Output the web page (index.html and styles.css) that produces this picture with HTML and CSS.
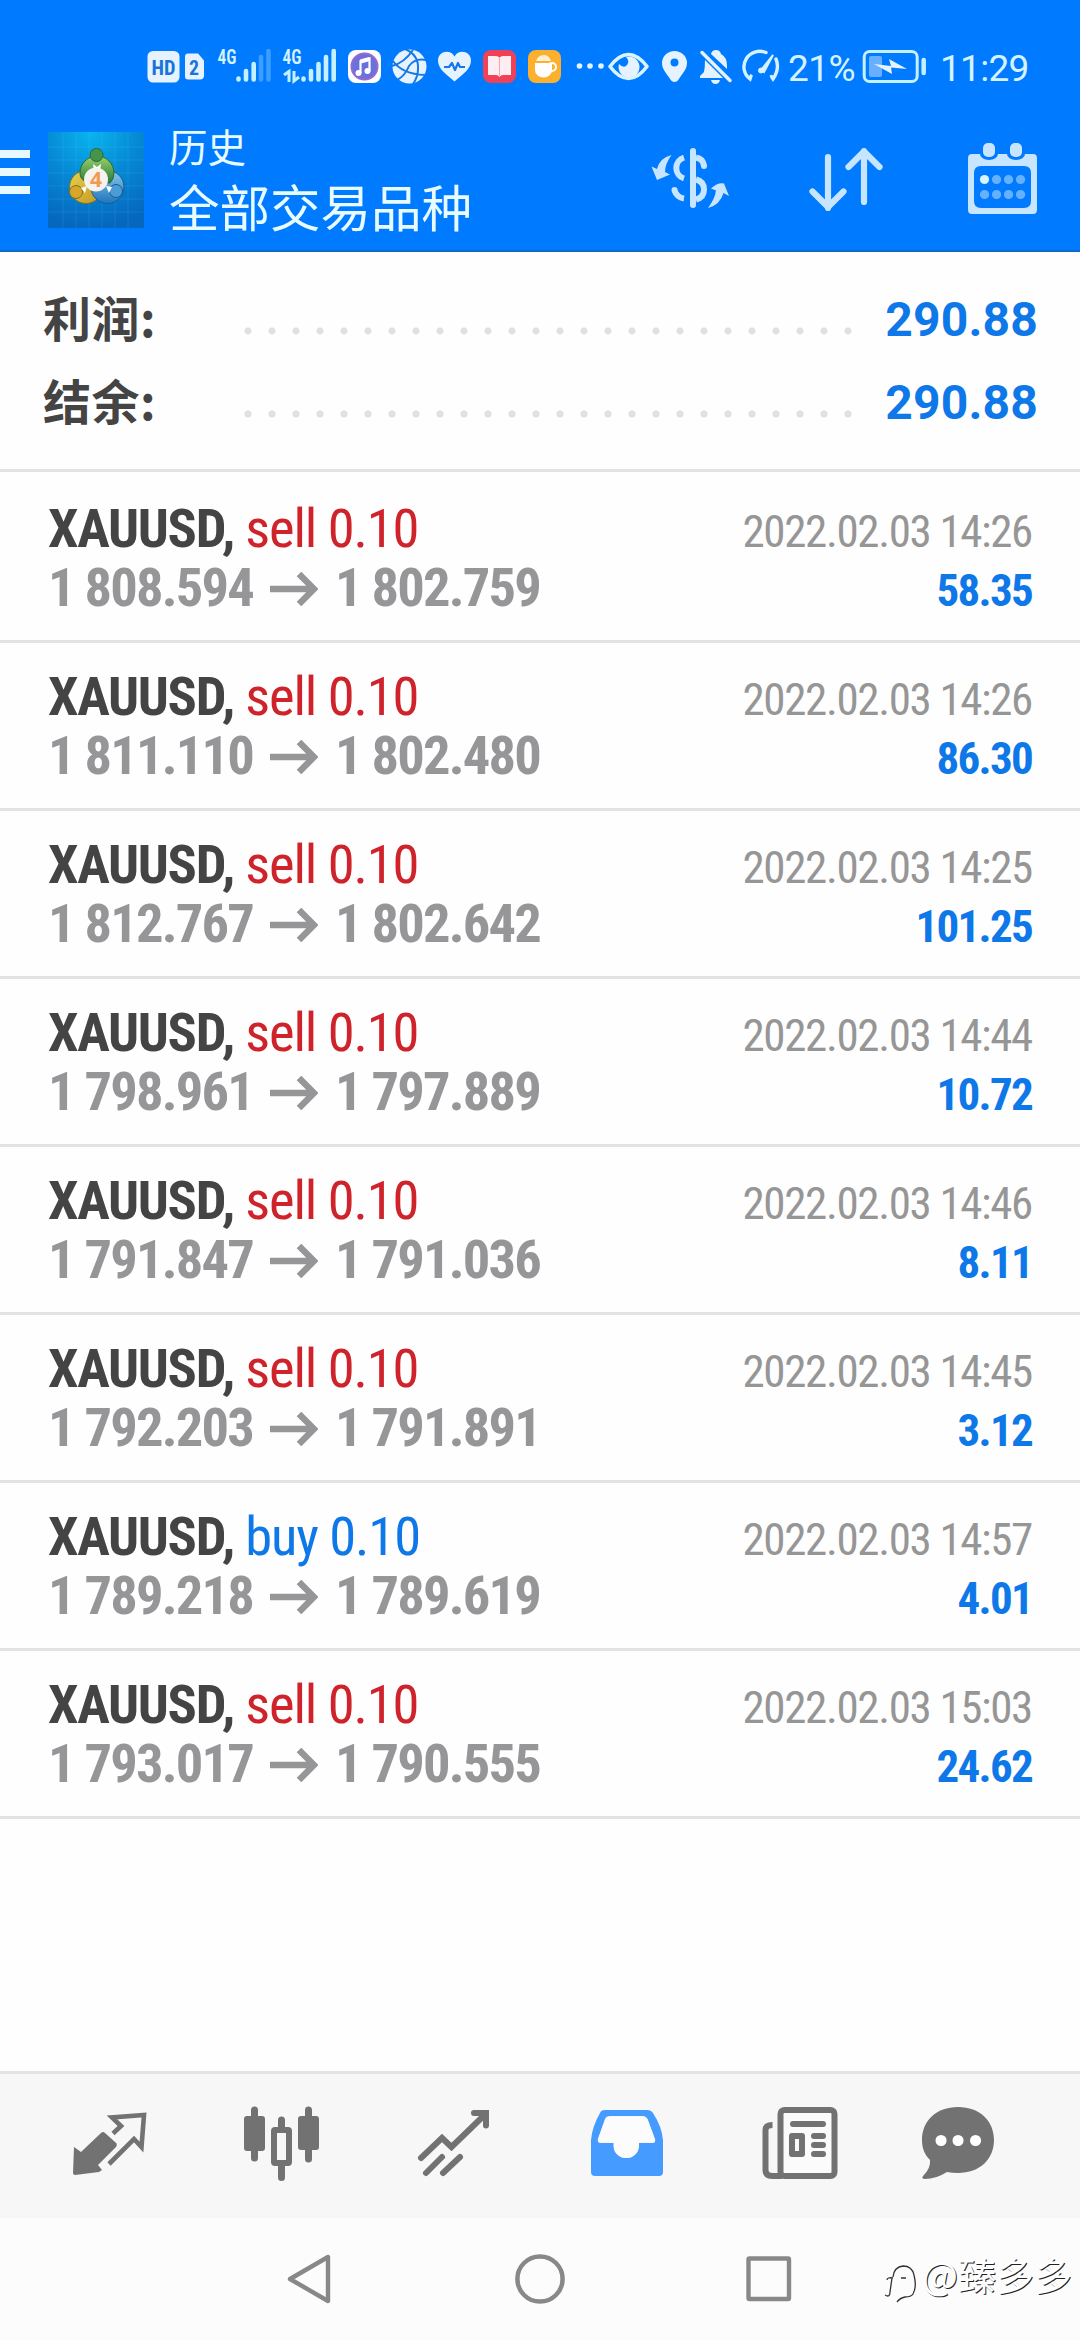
FILE: index.html
```html
<!DOCTYPE html>
<html lang="zh-CN">
<head>
<meta charset="utf-8">
<title>历史</title>
<link rel="stylesheet" href="styles.css">
</head>
<body>
<header class="top">
  <div class="status">
    <svg width="36" height="80" viewBox="146 30 36 80"><rect x="147.500" y="51" width="32" height="31.500" rx="5.500" fill="#e6f3ff"/><text class="badge" x="151.500" y="74.500" textLength="24" lengthAdjust="spacingAndGlyphs">HD</text></svg>
    <svg width="28" height="80" viewBox="182 30 28 80"><path d="M188 53.500h10l6 7v15a4 4 0 0 1-4 4h-12a3 3 0 0 1-3-3v-20a3 3 0 0 1 3-3z" fill="#e6f3ff"/><text class="badge" x="189" y="74.500" textLength="10" lengthAdjust="spacingAndGlyphs">2</text></svg>
    <svg width="66" height="80" viewBox="210 30 66 80"><text class="net" x="217.500" y="64" textLength="19" lengthAdjust="spacingAndGlyphs">4G</text><g stroke="#c5f1ff" stroke-width="4.600" stroke-linecap="round"><path d="M238.500 78.500v1M246 71v8.500M253.700 64v15.500"/><path d="M261 57v22.500M268.500 51v28.500" opacity=".3"/></g></svg>
    <svg width="66" height="80" viewBox="276 30 66 80"><text class="net" x="282.500" y="64" textLength="19" lengthAdjust="spacingAndGlyphs">4G</text><path d="M284 75l5-3.500V82M294 71v10l5-4" fill="none" stroke="#c5f1ff" stroke-width="3"/><path d="M303.500 78.500v1M311 71v8.500M318.500 64v15.500M326 57v22.500M333.700 51v28.500" stroke="#c5f1ff" stroke-width="4.600" stroke-linecap="round"/></svg>
    <svg width="45" height="80" viewBox="342 30 45 80"><rect x="348" y="50" width="33" height="33" rx="8" fill="#fff"/><circle cx="364.500" cy="66.500" r="13" fill="#6971dc" stroke="#9868cc" stroke-width="2"/><path d="M360.500 73v-12l9-2.500v12.500" fill="none" stroke="#fff" stroke-width="2.200"/><path d="M360.500 61.500l9-2.500" stroke="#fff" stroke-width="4"/><circle cx="358.500" cy="73" r="3" fill="#fff"/><circle cx="367.500" cy="71" r="3" fill="#fff"/></svg>
    <svg width="45" height="80" viewBox="387 30 45 80"><circle cx="409.500" cy="66.500" r="17" fill="#e6f3ff"/><path d="M392 66q12-3 21-16M393 61q9 13 32 14M405 49q14 6 13 20 0 8-5 15M397 80q8-4 12-14 6-8 17-6" fill="none" stroke="#1478e8" stroke-width="2"/></svg>
    <svg width="45" height="80" viewBox="432 30 45 80"><path d="M454.500 81.500C446 74 438 69 438 60.500c0-9 12-12 16.500-4 4.500-8 16.500-5 16.500 4 0 8.500-8 13.500-16.500 21z" fill="#e6f3ff"/><path d="M444 67h5l3-4 3 7 3-7 2 4h5" fill="none" stroke="#1478e8" stroke-width="2.200" stroke-linejoin="round"/></svg>
    <svg width="45" height="80" viewBox="477 30 45 80"><rect x="483" y="50" width="33" height="33" rx="8" fill="#ef4257"/><path d="M488 56h8q2 0 3.500 1.500Q501 56 503 56h8v19h-8q-2 0-3.500 2-1.500-2-3.500-2h-8z" fill="#ffeef1"/><path d="M499.500 57v19" fill="none" stroke="#f6a5ad" stroke-width="1"/></svg>
    <svg width="48" height="80" viewBox="522 30 48 80"><rect x="528" y="50" width="33" height="33" rx="8" fill="#fdb02e"/><path d="M535 63h17v7a8 7 0 0 1-17 0z" fill="#fff"/><path d="M536 61q2-6 8-6 5 0 7 6z" fill="#fff0d4"/><circle cx="552" cy="67" r="4" fill="none" stroke="#fff" stroke-width="2"/></svg>
    <svg width="34" height="80" viewBox="570 30 34 80" fill="#e6f3ff"><circle cx="579.500" cy="66" r="2.800"/><circle cx="590" cy="66" r="2.800"/><circle cx="601" cy="66" r="2.800"/></svg>
    <svg width="50" height="80" viewBox="604 30 50 80"><path d="M610 66.500q9-12 18.500-12t18.500 12q-9 12-18.500 12T610 66.500z" fill="none" stroke="#d9f3ff" stroke-width="3.600" stroke-linejoin="round"/><path d="M626 57a10.500 10.500 0 1 1-7 7q5 5 8 1t-1-8z" fill="#e6f3ff"/></svg>
    <svg width="42" height="80" viewBox="654 30 42 80"><path fill-rule="evenodd" d="M674.500 82q-3 0-5-4c-4-6-7.500-9-7.500-15a12.500 12 0 0 1 25 0c0 6-3.500 9-7.500 15q-2 4-5 4zM674.500 58.500a4 4 0 1 0 0 8 4 4 0 0 0 0-8z" fill="#e6f3ff"/></svg>
    <svg width="42" height="80" viewBox="696 30 42 80"><path d="M711 54q1-4 5-4t5 4q6 3 6 12v3zM705 60l18 18h-23v-2l4-4q1-5 1-12zM711 80h9q-1 4-4.500 4t-4.500-4z" fill="#e6f3ff"/><path d="M702 52.500l28 28" stroke="#e6f3ff" stroke-width="3.500" stroke-linecap="round"/></svg>
    <svg width="48" height="80" viewBox="738 30 48 80" fill="none" stroke="#d4f3ff" stroke-width="3.400" stroke-linecap="round"><path d="M766 52.500A16 15.500 0 0 0 750 79l1-3M776 59q4 10-3 20l-1.500-2.500"/><path d="M761 70l12-15-9 17z" fill="#d4f3ff" stroke-width="2"/><circle cx="761" cy="70.500" r="2.500" fill="#d4f3ff" stroke-width="1"/></svg>
    <span class="percent">21%</span>
    <svg width="76" height="80" viewBox="858 30 76 80"><rect x="864.200" y="51.500" width="53" height="30" rx="5.500" fill="none" stroke="#c5f1ff" stroke-width="3"/><rect x="869" y="56" width="13" height="21" rx="2" fill="#68b0ff"/><path d="M874 64l17 2-2-7 18 10-16-1.500 1 6.500z" fill="#e6f3ff"/><path d="M923.700 60v13" stroke="#c5f1ff" stroke-width="4.500" stroke-linecap="round"/></svg>
    <span class="clock">11:29</span>
  </div>
  <div class="appbar">
    <svg class="menu" width="30" height="46" viewBox="0 0 30 46"><path d="M0 4h30M0 22h30M0 40h30" stroke="#e8f8ff" stroke-width="8"/></svg>
    <svg class="logo" width="96" height="96" viewBox="0 0 96 96">
      <defs>
        <radialGradient id="sky" cx=".45" cy="0" r="1"><stop offset="0" stop-color="#08b5f0"/><stop offset=".5" stop-color="#0688d4"/><stop offset="1" stop-color="#0567be"/></radialGradient>
        <linearGradient id="green" x2="0" y2="1"><stop offset="0" stop-color="#9ed26b"/><stop offset="1" stop-color="#247a3b"/></linearGradient>
        <linearGradient id="gold" x2="1" y2="1"><stop offset="0" stop-color="#e5d34c"/><stop offset="1" stop-color="#c49622"/></linearGradient>
        <linearGradient id="blue" x2="0" y2="1"><stop offset="0" stop-color="#8dc8eb"/><stop offset="1" stop-color="#1f75bd"/></linearGradient>
      </defs>
      <rect width="96" height="96" fill="url(#sky)"/>
      <path d="M15 0v96M28 0v96M41 0v96M54 0v96M67 0v96M80 0v96M0 15h96M0 28h96M0 41h96M0 54h96M0 67h96M0 80h96" stroke="#8de0ff" stroke-opacity=".12"/>
      <circle cx="38" cy="55" r="16.500" fill="url(#gold)" stroke="#806f24"/>
      <circle cx="59.500" cy="55" r="16.500" fill="url(#blue)" stroke="#155c94"/>
      <path d="M32 41a17 17 0 1 1 34 0q0 6-4 10l-24-1q-6-3-6-9z" fill="url(#green)" stroke="#246c30"/>
      <circle cx="48.500" cy="23" r="6.500" fill="#45944c" stroke="#246c30"/>
      <circle cx="28" cy="60" r="6.500" fill="#d8a72a" stroke="#806f24"/>
      <circle cx="68" cy="59" r="6.500" fill="#4a9bd6" stroke="#155c94"/>
      <path d="M45 32l4 3 4-3-1 7h-6zM33 56l6-2-2 7zM64 55l-6-1 3 7z" fill="#fff"/>
      <circle cx="48" cy="47.500" r="12" fill="#f5f2ef"/>
      <text class="four" x="42" y="55">4</text>
    </svg>
    <div class="titles"><div class="sub">历史</div><div class="title">全部交易品种</div></div>
    <svg class="act-cur" width="84" height="70" viewBox="648 144 84 70" fill="none" stroke="#c8e5ff" stroke-width="6">
      <path d="M693 151v54" stroke-linecap="round"/>
      <path d="M684 157.500a11 11 0 0 0 0 21M684 198.500q-7-1-9.500-8M696 157.500q7 1 8 8.500" />
      <path d="M674.500 190v.1M704 166v.1" stroke-linecap="round"/>
      <path d="M696 179.500q8 2 8 10t-8 10"/>
      <path d="M671.500 155q-12 3-14.500 14l-5.500-2.500 5.500 13.500 13-5.500-5-2.500q0-8 6.500-17zM708 208q12-3 15.500-15l5.500 3-5-12.500q-6-1.500-13 5l5 2q-1 8-8 17.500z" fill="#c8e5ff" stroke="none"/>
    </svg>
    <svg class="act-sort" width="76" height="66" viewBox="808 146 76 66" fill="none" stroke="#c8e5ff" stroke-width="6.200" stroke-linecap="round" stroke-linejoin="round"><path d="M828 157v51M812.500 191.500l15.500 15.500 15.500-15.500M864 202v-51M848.500 167l15.500-15.500 15.500 15.500"/></svg>
    <svg class="act-cal" width="72" height="74" viewBox="966 142 72 74"><path fill-rule="evenodd" d="M972 154h8a9 6 0 0 0 18 0h9a9 6 0 0 0 18 0h8q4 0 4 4v52q0 4-4 4h-61q-4 0-4-4v-52q0-4 4-4zM981 166q-7 0-7 7v28q0 7 7 7h43q7 0 7-7v-28q0-7-7-7z" fill="#c8e5ff"/><rect x="983" y="143" width="12" height="14" rx="5" fill="#c8e5ff"/><rect x="1010" y="143" width="12" height="14" rx="5" fill="#c8e5ff"/><circle cx="984.500" cy="179.500" r="4.600" fill="#d8f5ff"/><path d="M996.500 179.500h.1M1008.500 179.500h.1M1020.500 179.500h.1M984.500 194.500h.1M996.500 194.500h.1M1008.500 194.500h.1M1020.500 194.500h.1" stroke="#66b1ff" stroke-width="9.200" stroke-linecap="round"/></svg>
  </div>
</header>
<section class="summary">
  <div class="sum-row"><span class="label">利润:</span><span class="dots"></span><span class="total">290.88</span></div>
  <div class="sum-row"><span class="label">结余:</span><span class="dots"></span><span class="total">290.88</span></div>
</section>
<svg width="0" height="0" class="defs"><symbol id="arrow" viewBox="0 0 48 34"><path d="M0 17h44M29 2l15 15-15 15" fill="none" stroke="#969699" stroke-width="6.500"/></symbol></svg>
<main class="deals">
  <article class="deal"><div class="left"><div class="name">XAUUSD, <span class="sell">sell 0.10</span></div><div class="prices"><span>1 808.594</span><svg class="arrow"><use href="#arrow"/></svg><span>1 802.759</span></div></div><div class="right"><div class="date">2022.02.03 14:26</div><div class="profit">58.35</div></div></article>
  <article class="deal"><div class="left"><div class="name">XAUUSD, <span class="sell">sell 0.10</span></div><div class="prices"><span>1 811.110</span><svg class="arrow"><use href="#arrow"/></svg><span>1 802.480</span></div></div><div class="right"><div class="date">2022.02.03 14:26</div><div class="profit">86.30</div></div></article>
  <article class="deal"><div class="left"><div class="name">XAUUSD, <span class="sell">sell 0.10</span></div><div class="prices"><span>1 812.767</span><svg class="arrow"><use href="#arrow"/></svg><span>1 802.642</span></div></div><div class="right"><div class="date">2022.02.03 14:25</div><div class="profit">101.25</div></div></article>
  <article class="deal"><div class="left"><div class="name">XAUUSD, <span class="sell">sell 0.10</span></div><div class="prices"><span>1 798.961</span><svg class="arrow"><use href="#arrow"/></svg><span>1 797.889</span></div></div><div class="right"><div class="date">2022.02.03 14:44</div><div class="profit">10.72</div></div></article>
  <article class="deal"><div class="left"><div class="name">XAUUSD, <span class="sell">sell 0.10</span></div><div class="prices"><span>1 791.847</span><svg class="arrow"><use href="#arrow"/></svg><span>1 791.036</span></div></div><div class="right"><div class="date">2022.02.03 14:46</div><div class="profit">8.11</div></div></article>
  <article class="deal"><div class="left"><div class="name">XAUUSD, <span class="sell">sell 0.10</span></div><div class="prices"><span>1 792.203</span><svg class="arrow"><use href="#arrow"/></svg><span>1 791.891</span></div></div><div class="right"><div class="date">2022.02.03 14:45</div><div class="profit">3.12</div></div></article>
  <article class="deal"><div class="left"><div class="name">XAUUSD, <span class="buy">buy 0.10</span></div><div class="prices"><span>1 789.218</span><svg class="arrow"><use href="#arrow"/></svg><span>1 789.619</span></div></div><div class="right"><div class="date">2022.02.03 14:57</div><div class="profit">4.01</div></div></article>
  <article class="deal"><div class="left"><div class="name">XAUUSD, <span class="sell">sell 0.10</span></div><div class="prices"><span>1 793.017</span><svg class="arrow"><use href="#arrow"/></svg><span>1 790.555</span></div></div><div class="right"><div class="date">2022.02.03 15:03</div><div class="profit">24.62</div></div></article>
</main>
<nav class="tabs">
  <svg width="80" height="80" viewBox="70 2102 80 80"><path d="M74 2147l7 5 20-19q2-2 4 0l10 9q3 2 1 5l-18 18 4 5-3 2-24 3q-2 0-2-2z" fill="#727272"/><path d="M113 2133.500l8-7.500-9-8.500 32-2.500-2.500 32-7.500-8-25 25" fill="none" stroke="#727272" stroke-width="4.600"/></svg>
  <svg width="80" height="80" viewBox="242 2102 80 80"><path d="M254.500 2110v48M308.500 2110v49" stroke="#727272" stroke-width="7" stroke-linecap="round"/><rect x="244" y="2116" width="21" height="35" rx="3" fill="#727272"/><rect x="298" y="2116" width="21" height="34" rx="3" fill="#727272"/><path d="M281.500 2120v10M281.500 2165v12.500" stroke="#727272" stroke-width="7" stroke-linecap="round"/><rect x="274" y="2130" width="15" height="33" rx="1" fill="#f7f7f7" stroke="#727272" stroke-width="6"/></svg>
  <svg width="80" height="80" viewBox="414 2102 80 80" fill="none" stroke="#727272" stroke-width="6" stroke-linecap="round"><path d="M421 2158l21-20 9.500 9 34-33M474 2113h12v12.500M426 2173l16-16M443 2173l17-16"/><path d="M480 2113h6v6z" fill="#727272"/></svg>
  <svg width="80" height="80" viewBox="586 2102 80 80"><path fill-rule="evenodd" d="M605 2110h42q4 0 6 3 9 14 10 27v32q0 4-4 4h-64q-4 0-4-4v-32q1-13 9-27 1-3 5-3zM610 2116q-4 0-5 3l-7 20q-1 4 3 4h12.500v3a12.500 12 0 0 0 25 0v-3h14q4 0 2-4l-7-19q-1-4-5-4z" fill="#459bff"/><path d="M609 2117h35q3 0 4 3l7 19q1 3-2 3h-14v4a12.500 12 0 0 1-25 0v-4h-13q-4 0-3-3l7-19q1-3 4-3z" fill="#fcfcfc"/></svg>
  <svg class="news" width="80" height="80" viewBox="760 2102 80 80" fill="none" stroke="#727272" stroke-width="6" stroke-linecap="round"><rect x="780.500" y="2110" width="54" height="66" rx="4" fill="#fbfbfb"/><path d="M772.500 2125q-7 0-7 5v40q0 6 7 6h10" stroke-linecap="butt"/><path d="M793 2124h30M814 2136h9M814 2145h9M814 2154h9"/><path d="M792 2136h10v18h-10z" stroke-linejoin="round"/></svg>
  <svg class="chat" width="80" height="80" viewBox="918 2102 80 80"><path d="M958 2107c22 0 36 14 36 33s-14 33-36 33q-6 0-11-1-11 7-22 7-4 0-2-3 8-8 7-16c-5-5-8-11-8-20 0-19 14-33 36-33z" fill="#727272"/><path d="M941 2140.500h.1M958 2140.500h.1M975.500 2140.500h.1" stroke="#fff" stroke-width="11" stroke-linecap="round"/></svg>
</nav>
<footer class="sysnav">
  <svg class="back" width="48" height="54" viewBox="284 2252 48 54"><path d="M328 2257v44l-38-22z" fill="none" stroke="#888" stroke-width="4.400" stroke-linejoin="round"/></svg>
  <svg class="home" width="54" height="54" viewBox="513 2252 54 54"><circle cx="540" cy="2279" r="22.600" fill="none" stroke="#888" stroke-width="4.500"/></svg>
  <svg class="recent" width="50" height="54" viewBox="744 2252 50 54"><rect x="748.500" y="2258.500" width="40.500" height="40.500" rx="1" fill="none" stroke="#888" stroke-width="4.400"/></svg>
  <div class="mark">
    <svg width="34" height="54" viewBox="884 2254 34 54" fill="none" stroke="#333" stroke-width="1.300"><path d="M885 2296q5 3 5-3l2-14M887 2281q0-3 6-2M893 2278q1-10 10-11 9 0 11 9 3 12-1 19-2 3-8 3-5 1-8 5M901 2279h5"/></svg>
    <span>@臻多多</span>
  </div>
</footer>
</body>
</html>
```
FILE: styles.css
```css
* { box-sizing: border-box; }
body { margin: 0; width: 1080px; height: 2340px; display: flex; flex-direction: column; background: #fefefe; font-family: Roboto, "Noto Sans CJK SC", sans-serif; overflow: hidden; }
svg { display: block; flex: none; }
.defs { position: absolute; }

.top { height: 252px; background: #007aff; border-bottom: 2px solid #1068c8; flex: none; }
.status { height: 110px; padding: 30px 0 0 146px; display: flex; color: #d4f3ff; font-size: 37px; line-height: 78px; white-space: nowrap; }
.percent { width: 72px; padding-left: 2px; letter-spacing: -.6px; }
.clock { padding-left: 6px; letter-spacing: -.7px; }
.badge { font: 700 21px "Roboto Condensed", sans-serif; fill: #1873dc; }
.net { font: 600 20px "Roboto Condensed", sans-serif; fill: #d4f3ff; }

.appbar { height: 140px; display: flex; align-items: flex-start; }
.menu { margin-top: 40px; }
.logo { margin: 22px 0 0 18px; }
.four { font: 700 21px "Open Sans", sans-serif; fill: #f39a50; }
.titles { margin: 7px 0 0 25px; width: 479px; color: #e8fcff; font-family: "Noto Sans CJK SC", sans-serif; white-space: nowrap; }
.sub { font-size: 38.5px; line-height: 56px; }
.title { font-size: 50.5px; line-height: 64px; }
.act-cur { margin-top: 34px; }
.act-sort { margin: 36px 0 0 76px; }
.act-cal { margin: 32px 0 0 82px; }

.summary { height: 220px; flex: none; padding: 26px 42px 0 43px; border-bottom: 3px solid #e3e3e3; }
.sum-row { height: 83px; display: flex; align-items: center; }
.label { width: 201px; margin-top: -6px; font-family: "Noto Sans CJK SC", sans-serif; font-weight: 700; font-size: 48px; letter-spacing: .5px; line-height: 83px; color: #444; }
.dots { width: 624px; height: 8px; margin-top: 23px; margin-left: -8px; background: radial-gradient(circle at 12px 4px, #e0e0e0 3.200px, transparent 3.900px) 0 0 / 24px 8px; }
.total { margin-left: auto; font-weight: 700; font-size: 48px; letter-spacing: .2px; line-height: 83px; color: #0f78e8; }

.deals { flex: 1; font-family: "Roboto Condensed", sans-serif; }
.deal { height: 168px; display: flex; justify-content: space-between; padding: 23px 48px 0; border-bottom: 3px solid #e3e3e3; }
.deal:first-child { height: 171px; padding-top: 26px; }
.name { padding-top: 1px; margin-bottom: -1px; font-weight: 700; font-size: 54.5px; line-height: 59px; letter-spacing: -1.300px; color: #444; white-space: pre; }
.sell, .buy { font-weight: 400; letter-spacing: -1.1px; }
.sell { color: #d0222a; }
.buy { color: #0f78e8; }
.prices { display: flex; align-items: center; padding-top: 1px; font-weight: 700; font-size: 54.5px; line-height: 59px; letter-spacing: -1.800px; color: #969699; }
.arrow { width: 48px; height: 34px; margin: 2px 17px 0 17px; }
.right { text-align: right; padding-top: 4px; }
.date { font-size: 45px; line-height: 59px; color: #969696; letter-spacing: -1.350px; }
.profit { font-size: 45px; line-height: 59px; font-weight: 700; color: #0f78e8; letter-spacing: -1.700px; }

.tabs { height: 147px; flex: none; background: #f7f7f7; border-top: 3px solid #e3e3e3; display: flex; gap: 92px; padding: 28px 0 0 70px; }
.news { margin-left: 2px; }
.chat { margin-left: -14px; }
.sysnav { height: 122px; flex: none; background: #fcfcfc; display: flex; align-items: flex-start; padding: 34px 0 0 284px; }
.home { margin-left: 181px; }
.recent { margin-left: 177px; }
.mark { margin-left: 90px; margin-top: 1px; display: flex; white-space: nowrap; }
.mark span { margin-left: 4px; font: 400 38px/42px "Noto Sans CJK SC", sans-serif; color: #fff; text-shadow: 1px 1px 0 #222; }
```
